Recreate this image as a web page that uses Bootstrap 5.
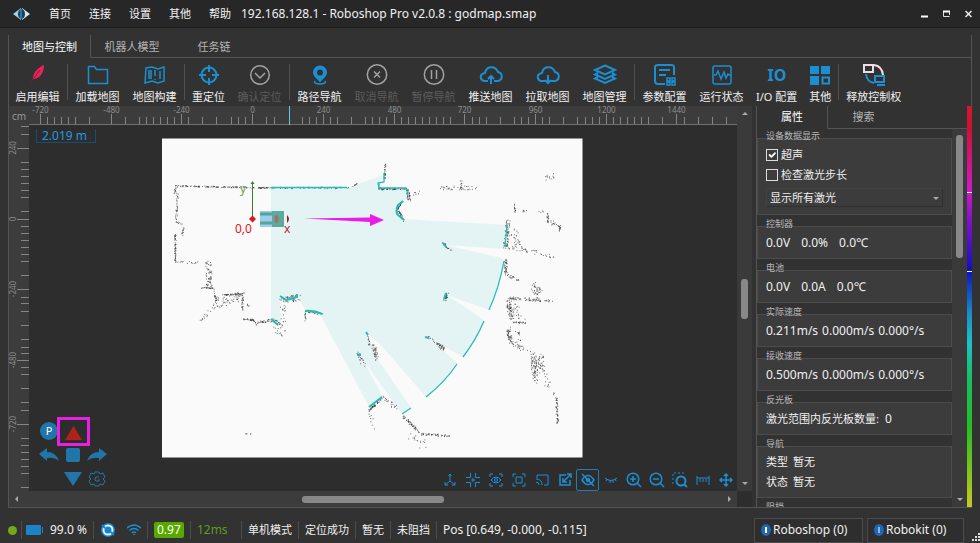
<!DOCTYPE html>
<html lang="zh-CN" data-bs-theme="dark">
<head>
<meta charset="utf-8">
<meta name="viewport" content="width=device-width, initial-scale=1">
<title>Roboshop Pro</title>
<link href="https://cdn.jsdelivr.net/npm/bootstrap@5.3.0/dist/css/bootstrap.min.css" rel="stylesheet">
<style>
:root{--blue:#1b8fd2;--pane:#3c3c3c;--edge:#545454;--base:#323232}
body{font-family:"Noto Sans","Noto Sans CJK SC",sans-serif;font-size:11px;line-height:16px;color:#f0f0f0;background:var(--base)}
button{background:none;border:0;padding:0;color:inherit;font:inherit}
svg{display:block;flex:none}
.ic{fill:none;stroke:var(--blue);stroke-width:2}
.thin{stroke-width:1}
.mid{stroke-width:1.5}
.fill-y{min-height:0}
.fill-x{min-width:0}
.titlebar{height:28px;background:#272727;border-bottom:1px solid #1c1c1c;padding:0 8px 0 12px}
.titlebar nav{gap:18px;margin:0 10px 0 18px}
.titlebar a{color:#f4f4f4;text-decoration:none}
.winbtns{gap:15px}
.caption{font-size:12px}
.frame{margin:7px 8px 0;border:1px solid var(--edge);border-top:0}
.tabs button{height:23px;color:#b4b4b4;border-bottom:1px solid var(--edge)}
.tabs button.on{color:#fff;border-bottom-color:transparent;border-right:1px solid var(--edge)}
.tabs .rest{border-bottom:1px solid var(--edge)}
.main-tabs button{width:82px;padding-top:2px}
.toolbar{height:48px;padding-top:4px}
.toolbar button{padding:0 6px;white-space:nowrap}
.toolbar .wide{min-width:57px}
.toolbar button svg{margin:0 auto 4px}
.toolbar button svg.tall{margin-bottom:3px}
.toolbar button:disabled{color:#5c5c5c}
.toolbar button:disabled .ic,.toolbar button:disabled svg{stroke:#a2a2a2}
.sep{width:1px;background:#505050;margin:2px 1px 6px}
.stage{background:var(--pane)}
.unit{width:20px;height:19px;color:#999;font-size:10px;line-height:20px}
.ruler-x{height:19px;border-bottom:1px solid #707070;overflow:visible}
.ruler-y{width:20px}
.tick{stroke:#858585;fill:none}
.num{fill:#8c8c8c;font-size:8px;text-anchor:middle}
.view{background:#2d2d2d}
.readout{left:7px;top:4px;width:60px;height:14px;border:1px solid #1a4e70;border-top:0;color:#1f9ae0;font-size:12px;line-height:14px;padding-left:5px}
.pad{left:8px;bottom:0;display:grid;grid-template-columns:repeat(3,24px);grid-auto-rows:24px;place-items:center;place-content:center}
.park{width:18px;height:18px;border-radius:50%;background:#1f76a8;color:#fff;line-height:18px}
.hot{width:33px;height:29px;border:3px solid #e91fe3}
.tools{right:0;bottom:0}
.tools button{width:23px;height:22px;display:flex;align-items:center;justify-content:center}
.tools button.on{border:1px solid #1e7eb5;border-radius:2px}
.vbar{width:15px;background:#3a3a3a}
.hbar{height:16px;background:#3c3c3c}
.corner{width:15px;background:#2d2d2d}
.arrow{width:14px;height:14px;fill:#aaa}
.thumb{background:#888;border-radius:3px}
.vbar .thumb{width:7px}.hbar .thumb{height:7px}
.side{width:215px;margin-left:4px;border-left:1px solid var(--edge)}
.side .tabs button{width:71px}
.props{overflow:hidden}
.props fieldset{border:1px solid #4c4c4c;background:#3c3c3c;margin:0 0 11px;min-width:0;padding:8px;position:relative;font-size:11px}
.props legend{position:absolute;left:8px;top:-9px;font-size:9px;line-height:12px;color:#b8b8b8;float:none;width:auto;margin:0}
.props .first{margin-top:9px;padding:6px 8px 7px}
.props p{margin:0;line-height:15px;height:15px;display:flex;gap:6px}
.props .val{font-size:12px;gap:11px}
.props .speed{font-size:12px;gap:4px}
.props .two p{line-height:20px;height:20px;gap:5px}
.props .two{padding:5px 8px 5px}
.props .form-check{padding:0;margin:0;min-height:20px;height:20px;display:flex;align-items:center;gap:3px}
.props .form-check-input{float:none;margin:0;width:12px;height:12px;border:1px solid #ddd;border-radius:0;background-color:transparent;box-shadow:none}
.props .form-check-input:checked{background-size:12px;border-color:#ddd;background-color:transparent}
.props select{font-size:11px;height:19px;padding:0 18px 0 3px;margin-top:3px;border:1px solid #303030;border-top-color:#424242;border-left-color:#424242;border-radius:0;background-color:#3c3c3c;color:#f0f0f0;line-height:16px;background-size:8px;background-position:right 2px center;background-image:url("data:image/svg+xml,%3Csvg xmlns='http://www.w3.org/2000/svg' viewBox='0 0 8 8'%3E%3Cpath d='M1 3h6L4 6z' fill='%23aaa'/%3E%3C/svg%3E")}
.hue{width:5px;margin-right:-1px;background:linear-gradient(#d01830 0,#d01030 5%,#d018c8 21%,#8010c8 29%,#1010c0 41%,#1890c8 52%,#20c0c8 59%,#18c060 68%,#20c020 80%,#c8c820 100%)}
.hue i{display:block;height:1px;background:#fff}
.status{height:35px;padding:9px 0 0 8px}
.status>*{flex:none}
.status .bar{width:1px;height:18px;background:#4c4c4c;margin:0 6px}
.status .bar.tight{margin:0 4px}
.status .charge{margin-left:6px;font-size:12px}
.status .wifi{margin-left:11px}
.txt12{font-size:12px}
.quality{background:#58a800;color:#fff;border-radius:2px;width:30px;height:16px;text-align:center;font-size:12px}
.lag{color:#5c9c20;font-size:12px;width:38px}
.log{border:1px solid #4c4c4c;height:25px;background:#2e2e2e;padding:0 6px;font-size:12px;display:flex;align-items:center;gap:2px}
.log.shop{min-width:109px}
.log.kit{min-width:97px;margin:0 6px 0 4px}
</style>
<script src="https://cdn.jsdelivr.net/npm/bootstrap@5.3.0/dist/js/bootstrap.bundle.min.js"></script>
</head>
<body class="vh-100 d-flex flex-column overflow-hidden">
<header class="titlebar d-flex align-items-center flex-shrink-0">
  <svg width="19" height="14" viewBox="0 0 19 14"><path d="M1 7 9 1v12z" fill="#a9cfdf"/><path d="M18 7 10 1v12z" fill="#d5e8ef"/><ellipse cx="9.500" cy="7" rx="3.500" ry="5" fill="#15435e"/><path d="M9 2v10" stroke="#5aa8cc"/></svg>
  <nav class="d-flex"><a href="#">首页</a><a href="#">连接</a><a href="#">设置</a><a href="#">其他</a><a href="#">帮助</a></nav>
  <span class="caption">192.168.128.1 - Roboshop Pro v2.0.8 : godmap.smap</span>
  <div class="winbtns ms-auto d-flex">
    <button aria-label="最小化"><svg width="7" height="9"><path d="M0 7.500h7" stroke="#fff" stroke-width="2"/></svg></button>
    <button aria-label="还原"><svg width="7" height="9"><path d="M6.500 7.500h-6V2M6.500 2v4" fill="none" stroke="#ddd"/><path d="M0 2.500h7" stroke="#fff" stroke-width="2"/></svg></button>
    <button aria-label="关闭"><svg width="7" height="9"><path d="m.5 2 6 6m0-6-6 6" stroke="#eee" stroke-width="1.500"/></svg></button>
  </div>
</header>

<main class="frame fill-y flex-grow-1 d-flex flex-column">
  <div class="tabs main-tabs d-flex flex-shrink-0"><button class="on">地图与控制</button><button>机器人模型</button><button>任务链</button><span class="rest flex-grow-1"></span></div>
  <div class="toolbar d-flex flex-shrink-0">
    <button class="wide"><svg width="20" height="21" viewBox="0 0 20 21"><path d="M16 1c-5 2-10 6-11 13l-1 2 2-1c6-1 10-6 10-14z" fill="#e8245c"/><path d="m3 18 9-12" stroke="#8f1238" fill="none"/></svg>启用编辑</button>
    <span class="sep"></span>
    <button class="wide"><svg width="22" height="21" class="ic mid" viewBox="0 0 22 21"><path d="M1.500 2.500h6l2 3h11v14h-19z"/></svg>加载地图</button>
    <button class="wide"><svg width="22" height="21" class="ic mid" viewBox="0 0 22 21"><path d="m2 4 6-1 6 2 6-2v14l-6 2-6-2-7 2zM7 6v9M11 6v6m0 3v1M16 7v8M5 6v9"/></svg>地图构建</button>
    <span class="sep"></span>
    <button><svg width="22" height="21" class="ic" viewBox="0 0 22 21"><circle cx="11" cy="11" r="7.500"/><path d="M11 1v7m0 6v7M1 11h7m6 0h7"/></svg>重定位</button>
    <button class="wide" disabled><svg width="22" height="21" class="ic mid" viewBox="0 0 22 21"><circle cx="11" cy="11" r="9.300"/><path d="m6 9 5 5 5-5"/></svg>确认定位</button>
    <span class="sep"></span>
    <button class="wide"><svg width="22" height="21" viewBox="0 0 22 21"><path fill="#1b8fd2" fill-rule="evenodd" d="M11 1.500a7 7 0 0 0-7 7c0 4 5 7 7 10 2-3 7-6 7-10a7 7 0 0 0-7-7zm0 4a3 3 0 1 1 0 6 3 3 0 0 1 0-6z"/><path class="ic mid" d="M6 17c-3 4 13 4 10 0"/></svg>路径导航</button>
    <button class="wide" disabled><svg width="24" height="21" class="ic mid" viewBox="0 0 22 21"><circle cx="11" cy="10.500" r="9.700"/><path d="m8 7.500 6 6m0-6-6 6"/></svg>取消导航</button>
    <button class="wide" disabled><svg width="24" height="21" class="ic mid" viewBox="0 0 22 21"><circle cx="11" cy="10.500" r="9.700"/><path d="M8.500 6v9m5-9v9"/></svg>暂停导航</button>
    <button class="wide"><svg width="24" height="21" class="ic" viewBox="0 0 24 21"><path d="M9 17H5c-4-1-5-7 1-8 1-7 10-8 13-1 5 1 5 8 0 9h-4M12 20v-8m-3 3 3-3 3 3"/></svg>推送地图</button>
    <button class="wide"><svg width="24" height="21" class="ic" viewBox="0 0 24 21"><path d="M9 17H5c-4-1-5-7 1-8 1-7 10-8 13-1 5 1 5 8 0 9h-4M12 11v8m-3-3 3 3 3-3"/></svg>拉取地图</button>
    <button class="wide"><svg width="24" height="21" class="ic" viewBox="0 0 24 21"><path d="m12 1.500 10 4.500-10 4.500L2 6zM5 9l-3 1.500L12 15l10-4.500L19 9M5 13l-3 1.500L12 19l10-4.500-3-1.500"/></svg>地图管理</button>
    <span class="sep"></span>
    <button class="wide"><svg width="22" height="22" class="ic tall" viewBox="0 0 22 22"><path d="M11 20H4q-3 0-3-3V3q0-2 3-2h13q3 0 3 2v8M5 6h11M5 11h7"/><path stroke-width="1.500" d="M13 14h3v3h-3zm5 0h3v3h-3zm-5 4h3v3h-3zm5 0h3v3h-3z"/></svg>参数配置</button>
    <button class="wide"><svg width="20" height="21" class="ic mid" viewBox="0 0 20 21"><rect x="1" y="2" width="18" height="18" rx="2"/><path d="M2 11h2l2-4 3 8 3-7 2 6 2-4 1 1h2"/></svg>运行状态</button>
    <button><svg width="22" height="21" viewBox="0 0 22 21"><text x="11" y="17" text-anchor="middle" font-size="16" font-weight="700" fill="#1b8fd2" font-family="Noto Sans">IO</text></svg>I/O 配置</button>
    <button><svg width="20" height="21" viewBox="0 0 20 21"><path fill="#1b8fd2" d="M0 2h9v8H0zm11 0h9v8h-9zM0 12h9v9H0z"/><path class="ic" d="M12.500 13.500h6.500v6h-6.500z"/></svg>其他</button>
    <span class="sep"></span>
    <button><svg width="24" height="22" class="tall" viewBox="0 0 24 22"><path d="M2 1h9v7H2zM12 1q8 1 9 10" fill="none" stroke="#eadfe4" stroke-width="2"/><path class="ic" d="M13 12h9v6h-9zM15 21h8M4 10q1 8 8 9"/></svg>释放控制权</button>
  </div>

  <div class="d-flex flex-grow-1 fill-y">
    <section class="stage fill-x flex-grow-1 d-flex flex-column">
      <div class="d-flex flex-grow-1 fill-y">
        <div class="flex-grow-1 d-flex flex-column fill-x">
          <div class="d-flex flex-shrink-0"><span class="unit text-center">cm</span><svg id="rx" class="ruler-x flex-grow-1"></svg></div>
          <div class="d-flex flex-grow-1 fill-y">
            <svg id="ry" class="ruler-y h-100"></svg>
            <div class="view flex-grow-1 position-relative overflow-hidden">
              <svg class="w-100 h-100 position-absolute" role="img" aria-label="地图">
                <g transform="translate(-29 -125)">
                  <path d="M162 138.500h420.500V457.500H162z" fill="#fafafa"/>
                  <path fill="#e4f4f5" d="M271 187 347 188 383 175 379 188 406 189 408 199 400 202 396 210 404 219 507 225 504 249 446 245 501 258 505 262 498 288 489 310 447 295 484 320 475 339 463 357 427 337 457 363 443 382 426 397 380 344 367 333 377 358 411 408 402 414 362 358 383 397 369 407 320 314 306 311 298 297 290 302 280 297 281 322 271 320z"/>
                  <g id="cloud"></g>
                  <g fill="none" stroke="#25bcb8" stroke-width="1.300">
                    <path d="M271 187.500h76M378 188h28l2 7M384 173v9l-6 1 1 5M507 225l-2 22M504 261q-5 27-15 49M484 321q-8 19-21 36M457 364q-12 18-31 33M411 408l-9 6"/>
                    <path stroke-width="2" d="m403 201-5 4q-3 7 0 10l6 5M280 296l6 4 5-1 6-2v-3M305 311q9-1 17 3M271 319l7 6M369 407l13-10M443 243l3 4M444 299l2-6M366 332l2 3M357 355h4M425 337l4 1"/>
                  </g>
                  <path d="M252.500 218v-35" stroke="#3c7b34"/><path d="m250.500 184 2-3 2 3z" fill="#3c7b34"/>
                  <text x="240" y="193" font-size="12" fill="#739650">y</text>
                  <path d="m252.500 215.500 3.500 3.500-3.500 3.500-3.500-3.500z" fill="#e01520"/>
                  <rect x="260" y="211" width="12" height="16" fill="#9bcdf0"/><path d="M260 214h12m-12 9h12" stroke="#56a58f" stroke-width="3"/><rect x="272" y="211" width="12" height="16" fill="#5baa9d"/><ellipse cx="276.500" cy="219" rx="2" ry="4" fill="#a07070"/><path d="M287 215q4 4 0 8z" fill="#a41824"/>
                  <text x="235" y="233" font-size="12" fill="#e01520">0,0</text><text x="284" y="233" font-size="12" fill="#c02030">x</text>
                  <path d="M304 218.500 370 217.500 370 214 384 220 370 226 370 222z" fill="#ed1bea"/>
                </g>
              </svg>
              <div class="readout position-absolute">2.019 m</div>
              <div class="pad position-absolute">
                <button class="park">P</button>
                <button class="hot" aria-label="前进"><svg width="27" height="23"><path d="M5 20 13.500 6 22 20z" fill="#b02318"/></svg></button><span></span>
                <button aria-label="左转"><svg width="20" height="14" viewBox="0 0 20 14"><path d="M0 6 8 0v4q9 0 12 9-5-4-12-3v3z" fill="#2076a8"/></svg></button>
                <button aria-label="停止"><svg width="14" height="14"><rect width="14" height="14" rx="2" fill="#2076a8"/></svg></button>
                <button aria-label="右转"><svg width="20" height="14" viewBox="0 0 20 14"><path d="m20 6-8-6v4Q3 4 0 13q5-4 12-3v3z" fill="#2076a8"/></svg></button>
                <span></span>
                <button aria-label="后退"><svg width="18" height="14"><path d="M0 0h18L9 14z" fill="#2076a8"/></svg></button>
                <button aria-label="设置"><svg width="18" height="16" viewBox="0 0 18 16" fill="none" stroke="#2076a8"><path d="M7 1h4l1 2 3-1 2 4-2 2 2 2-2 4-3-1-1 2H7l-1-2-3 1-2-4 2-2-2-2 2-4 3 1z"/><path d="M11 6H8L7 7v2l1 1h3V8"/></svg></button>
              </div>
              <div class="tools position-absolute d-flex">
                <button aria-label="坐标轴"><svg class="ic thin" width="14" height="14"><path d="M7 1v7l-5 4M7 8l5 4M5.500 3 7 1l1.500 2M2 9v3h3M12 9v3H9"/></svg></button>
                <button aria-label="居中"><svg class="ic thin" width="16" height="16"><path d="M5.500 1v4.500H1M10.500 1v4.500H15M5.500 15v-4.500H1M10.500 15v-4.500H15M8 6v4M6 8h4"/></svg></button>
                <button aria-label="查看"><svg class="ic thin" width="14" height="14"><path d="M1 4V1h3m6 0h3v3m0 6v3h-3m-6 0H1v-3M2 7q5-6 10 0-5 6-10 0z"/><circle cx="7" cy="7" r="1.500"/></svg></button>
                <button aria-label="适应窗口"><svg class="ic thin" width="14" height="14"><path d="M1 4V1h3m6 0h3v3m0 6v3h-3m-6 0H1v-3M4 4h6v6H4z"/></svg></button>
                <button aria-label="投屏"><svg class="ic thin" width="14" height="14"><path d="M2 5V2h11v10H9M1 6q6 0 6 6M1 9q3 0 3 3"/></svg></button>
                <button aria-label="缩放"><svg class="ic mid" width="14" height="14"><path d="M8 2H2v10h10V7M12 2 5 9m0-4v4h4M9 1h4v4"/></svg></button>
                <button class="on" aria-label="隐藏激光"><svg class="ic mid" width="14" height="14"><path d="M1 7q6-9 12 0-6 9-12 0z"/><circle cx="7" cy="7" r="1.500"/><path d="m1 1 12 12"/></svg></button>
                <button aria-label="闭眼"><svg class="ic thin" width="14" height="14"><path d="M1 5q6 5 12 0M2 8l1-2m3 4V7m3 3V7m3 1-1-2"/></svg></button>
                <button aria-label="放大"><svg class="ic mid" width="16" height="16"><circle cx="7" cy="7" r="5.800"/><path d="m11 11 4 4M4 7h6M7 4v6"/></svg></button>
                <button aria-label="缩小"><svg class="ic mid" width="16" height="16"><circle cx="7" cy="7" r="5.800"/><path d="m11 11 4 4M4 7h6"/></svg></button>
                <button aria-label="框选放大"><svg class="ic thin" width="16" height="16"><path d="M1 12V1h12" stroke-dasharray="2 2"/><g stroke-width="2"><circle cx="9" cy="9" r="4.500"/><path d="m12 12 3 3"/></g></svg></button>
                <button aria-label="测距"><svg class="ic thin" width="14" height="14"><path d="M1 3v9m12-9v9M1 5h12M4 6v3m3-3v3m3-3v3"/></svg></button>
                <button aria-label="移动"><svg class="ic mid" width="14" height="14"><path d="M7 1v12M1 7h12M5 3l2-2 2 2M5 11l2 2 2-2M3 5 1 7l2 2m8-4 2 2-2 2"/></svg></button>
              </div>
            </div>
          </div>
        </div>
        <div class="vbar d-flex flex-column align-items-center">
          <svg class="arrow" viewBox="0 0 14 14"><path d="m4 9 3-3 3 3z"/></svg><span style="flex:159"></span><span class="thumb" style="flex:40"></span><span style="flex:158"></span><svg class="arrow" viewBox="0 0 14 14"><path d="m4 5 3 3 3-3z"/></svg>
        </div>
      </div>
      <div class="d-flex flex-shrink-0">
        <div class="hbar flex-grow-1 d-flex align-items-center">
          <svg class="arrow" viewBox="0 0 14 14"><path d="M9 4 6 7l3 3z"/></svg><span style="flex:279"></span><span class="thumb" style="flex:142"></span><span style="flex:279"></span><svg class="arrow" viewBox="0 0 14 14"><path d="m5 4 3 3-3 3z"/></svg>
        </div><span class="corner"></span>
      </div>
    </section>

    <aside class="side d-flex flex-column flex-shrink-0">
      <div class="d-flex flex-grow-1 fill-y">
        <div class="flex-grow-1 d-flex flex-column fill-x">
          <div class="tabs d-flex flex-shrink-0"><button class="on">属性</button><button>搜索</button><span class="rest flex-grow-1"></span></div>
          <div class="d-flex flex-grow-1 fill-y">
            <form class="props flex-grow-1">
              <fieldset class="first"><legend>设备数据显示</legend>
                <div class="form-check"><input class="form-check-input" type="checkbox" id="sonar" checked><label for="sonar">超声</label></div>
                <div class="form-check"><input class="form-check-input" type="checkbox" id="step"><label for="step">检查激光步长</label></div>
                <select class="form-select" aria-label="激光显示"><option>显示所有激光</option></select>
              </fieldset>
              <fieldset><legend>控制器</legend><p class="val"><span>0.0V</span><span>0.0%</span><span>0.0℃</span></p></fieldset>
              <fieldset><legend>电池</legend><p class="val"><span>0.0V</span><span>0.0A</span><span>0.0℃</span></p></fieldset>
              <fieldset><legend>实际速度</legend><p class="speed"><span>0.211m/s</span><span>0.000m/s</span><span>0.000°/s</span></p></fieldset>
              <fieldset><legend>接收速度</legend><p class="speed"><span>0.500m/s</span><span>0.000m/s</span><span>0.000°/s</span></p></fieldset>
              <fieldset><legend>反光板</legend><p><span>激光范围内反光板数量:</span><span class="txt12">0</span></p></fieldset>
              <fieldset class="two"><legend>导航</legend><p><span>类型</span><span>暂无</span></p><p><span>状态</span><span>暂无</span></p></fieldset>
              <fieldset><legend>阻挡</legend></fieldset>
            </form>
            <div class="vbar d-flex flex-column align-items-center"><span style="flex:6"></span><span class="thumb" style="flex:123"></span><span style="flex:236"></span><svg class="arrow" viewBox="0 0 14 14"><path d="m4 5 3 3 3-3z"/></svg></div>
          </div>
        </div>
        <div class="hue d-flex flex-column"><span style="flex:86"></span><i></i><span style="flex:78"></span><i></i><span style="flex:235"></span></div>
      </div>
    </aside>
  </div>
</main>

<footer class="status d-flex align-items-center flex-shrink-0">
  <svg width="9" height="9"><circle cx="4.500" cy="4.500" r="4.500" fill="#74a818"/></svg>
  <span class="bar tight"></span>
  <svg width="18" height="10"><rect width="15" height="10" rx="1" fill="#1b84c8"/><path d="M16.500 2v6" stroke="#1b84c8"/></svg>
  <span class="charge">99.0 %</span>
  <span class="bar"></span>
  <svg width="16" height="16" viewBox="0 0 16 16"><circle cx="8" cy="8" r="7" fill="#1684cc"/><circle cx="8" cy="8" r="4.500" fill="none" stroke="#e8f4fb" stroke-width="2"/><path d="M2 3 5 6m6 4 3 3" stroke="#1684cc" stroke-width="2"/></svg>
  <svg class="wifi ic mid" width="14" height="12" viewBox="0 0 14 12"><path d="M0 4q7-6 14 0M2.500 6.500q4.500-4 9 0M5 9q2-2 4 0"/><path d="M7 10v1"/></svg>
  <span class="bar"></span>
  <span class="quality">0.97</span>
  <span class="bar"></span>
  <span class="lag">12ms</span>
  <span class="bar"></span>
  <span>单机模式</span><span class="bar"></span><span>定位成功</span><span class="bar"></span><span>暂无</span><span class="bar"></span><span>未阻挡</span><span class="bar"></span>
  <span class="txt12">Pos [0.649, -0.000, -0.115]</span>
  <button class="log shop ms-auto"><svg width="10" height="12"><ellipse cx="5" cy="6" rx="5" ry="6" fill="#1f66b4"/><path d="M5 3v6" stroke="#fff" stroke-width="2"/></svg>Roboshop (0)</button>
  <button class="log kit"><svg width="10" height="12"><ellipse cx="5" cy="6" rx="5" ry="6" fill="#1f66b4"/><path d="M5 3v6" stroke="#fff"/></svg>Robokit (0)</button>
  <svg class="align-self-end" width="10" height="10" viewBox="0 0 10 10" fill="#ddd"><path d="M8 0h2v2H8zM5 3h2v2H5zm3 0h2v2H8zM2 6h2v2H2zm3 0h2v2H5zm3 0h2v2H8z"/></svg>
</footer>

<script>
const NS = 'http://www.w3.org/2000/svg';
const add = (to, tag, attrs, text) => {
  const e = document.createElementNS(NS, tag);
  for (const k in attrs) e.setAttribute(k, attrs[k]);
  if (text) e.textContent = text;
  to.append(e);
};
// Horizontal ruler: positions of short ticks and labelled ticks
const rx = document.getElementById('rx');
const minor = [47,54,61,68,75,89,125,139,146,153,160,167,174,188,202,216,231,238,245,266,274,302,309,316,330,337,351,365,372,379,386,401,408,415,422,429,436,443,450,472,479,486,500,514,521,528,542,549,563,577,585,592,599,613,620,627,634,641,648,662,684,698,712,726];
add(rx, 'path', {class: 'tick', d: minor.map(x => `M${x - 28.5} 18v-7`).join('')});
for (let i = 0; i < 10; i++) {
  const x = Math.round(40 + i * 70.7) - 28.5;
  add(rx, 'path', {class: 'tick', d: `M${x} 18V8`});
  add(rx, 'text', {class: 'num', x, y: 7}, String(i * 240 - 720));
}
add(rx, 'path', {d: 'M260.5 0v19', stroke: '#62c6e4'});
// Vertical ruler
const ry = document.getElementById('ry');
const left = [126,134,162,169,176,183,190,197,211,226,233,240,247,254,261,275,297,303,311,325,339,347,353,367,374,388,402,410,438,445,452,459,466,473,487];
add(ry, 'path', {class: 'tick', d: left.map(y => `M20 ${y - 124.5}h-8`).join('')});
[['240',148],['0',219],['-240',289],['-480',360],['-720',424]].forEach(([t, y]) => {
  add(ry, 'path', {class: 'tick', d: `M20 ${y - 124.5}h-12`});
  add(ry, 'text', {class: 'num', transform: `translate(7 ${y - 125}) rotate(-90)`}, t);
});
// Laser scan points: x1, y1, x2, y2, count, spread
const scan = [
 [175,186,271,188,130,.6],[271,188,350,188,50,1],[350,187,357,184,8,.5],[176,187,174,193,12,1],[177,193,176,220,30,1],[176,222,182,224,8,1],[183,225,182,235,12,1],[175,235,175,262,50,.7],[176,262,198,263,14,1],[208,262,209,288,60,3],[200,288,213,288,20,.6],
 [213,288,216,303,20,.8],[216,303,241,296,55,5],[222,295,242,294,40,.5],[242,294,242,310,24,1],[215,305,200,321,16,2],[247,303,248,306,5,1],[243,319,253,320,28,.8],[253,320,256,325,8,.6],[256,323,271,320,26,1],[271,320,280,325,24,2],[281,300,298,298,50,3],[283,303,282,334,24,3],[305,312,305,322,12,.5],[305,311,322,314,26,1],[273,327,282,336,8,2],
 [385,163,384,180,28,.8],[378,183,379,189,12,1],[379,189,407,189,60,.8],[407,189,409,200,30,1.5],[408,196,420,192,10,1.5],[402,202,397,209,24,.7],[397,209,404,221,28,.8],[441,188,475,188,34,2],[461,178,461,192,12,1],[545,178,555,175,12,3],[514,205,515,213,12,.7],[522,211,547,212,10,1],[547,212,548,222,18,1],[548,222,560,226,14,2],[559,226,560,231,14,1],
 [508,220,505,248,70,2],[512,230,518,245,26,4],[505,246,556,257,40,2],[505,260,506,275,40,1.5],[507,275,519,281,18,1],[443,243,446,248,20,1],[446,248,452,250,7,.5],[444,300,447,294,26,1.3],[534,286,540,296,40,4],[508,298,551,301,65,1.5],[508,299,511,318,60,2.5],[511,305,521,316,24,4],[513,322,525,323,22,.7],[508,328,510,342,45,2],[511,342,526,350,26,3],[517,331,520,341,12,2],
 [533,354,535,381,80,3],[540,354,541,372,34,3],[543,368,551,395,18,4],[556,396,557,424,45,1],[367,332,369,345,14,1],[373,345,377,360,40,2],[358,354,364,366,20,2],[427,337,441,346,22,1],[439,346,443,349,26,2],[369,410,383,397,50,1],[383,398,396,408,18,2],[369,412,373,430,9,2],[402,416,420,433,50,1.2],[420,434,450,436,45,1],[412,436,424,446,16,4],[245,434,253,434,5,.2]
];
let seed = 7;
const rnd = () => (seed = seed * 16807 % 2147483647) / 2147483647;
let dots = '';
for (const [a, b, c, d, n, s] of scan)
  for (let i = 0; i < n; i++) {
    const t = rnd();
    dots += `M${(a + (c - a) * t + (rnd() - .5) * 2 * s).toFixed(1)} ${(b + (d - b) * t + (rnd() - .5) * 2 * s).toFixed(1)}h.8`;
  }
add(document.getElementById('cloud'), 'path', {d: dots, stroke: '#444', 'stroke-width': .9, fill: 'none'});
</script>
</body>
</html>
